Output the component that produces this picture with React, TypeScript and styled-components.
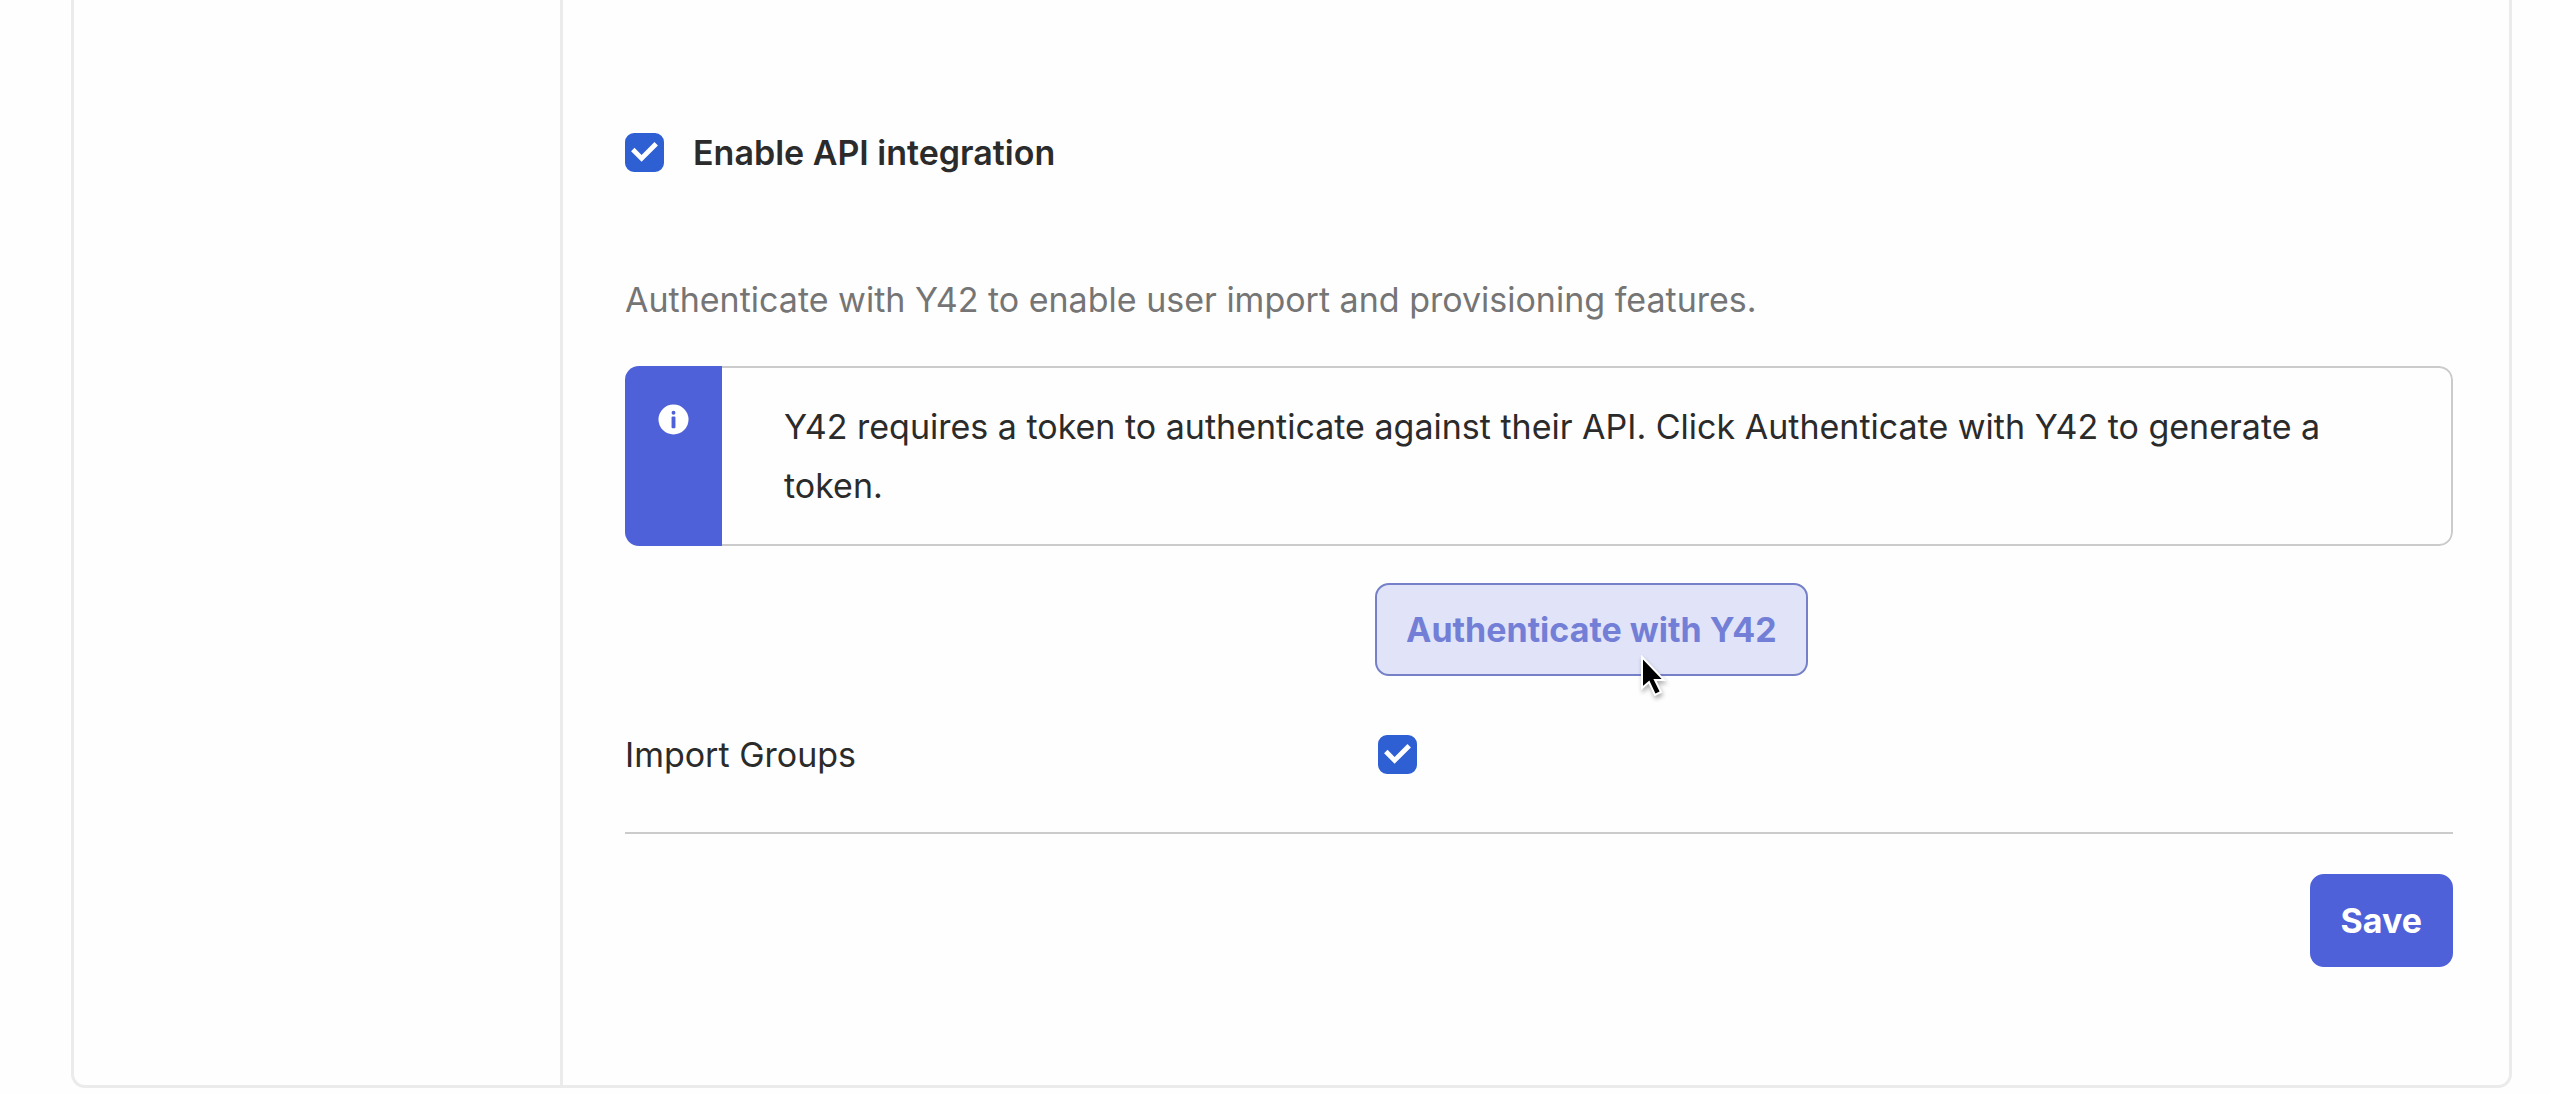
import React, { useState } from "react";
import styled, { createGlobalStyle } from "styled-components";

const GlobalStyle = createGlobalStyle`
  *, *::before, *::after { box-sizing: border-box; }
  body {
    margin: 0;
    background: #fefefe;
    color: #2b2b2b;
    font-family: Inter, "Liberation Sans", sans-serif;
    font-size: 34px;
    line-height: 59px;
  }
  button, input { font: inherit; }
`;

const Page = styled.main`
  padding: 0 38px 8px 71px;
`;

const Card = styled.div`
  display: flex;
  border: 3px solid #ebebeb;
  border-top: 0;
  border-radius: 0 0 14px 14px;
`;

const Sidebar = styled.aside`
  flex: 0 0 489px;
  border-right: 3px solid #ebebeb;
`;

const Content = styled.form`
  flex: 1;
  min-width: 0;
  padding: 123px 56px 118px 62px;
`;

const CheckField = styled.label`
  display: flex;
  align-items: center;
  gap: 29px;
  font-weight: 600;
`;

const CheckWrap = styled.span`
  display: grid;
  width: 39px;
  height: 39px;
  > * { grid-area: 1 / 1; }
`;

const CheckInput = styled.input`
  appearance: none;
  width: 39px;
  height: 39px;
  margin: 0;
  border: 2px solid #a0a0a0;
  border-radius: 9px;
  background: #fff;
  &:checked { border-color: #2e5fd3; background: #2e5fd3; }
`;

const CheckMark = styled.svg`
  width: 39px;
  height: 39px;
  pointer-events: none;
  fill: none;
  stroke: #fff;
  stroke-width: 5;
`;

const Description = styled.p`
  margin: 88px 0 37px;
  color: #757575;
`;

const Notice = styled.div`
  display: flex;
  overflow: hidden;
  border-radius: 14px;
`;

const NoticeIcon = styled.div`
  flex: 0 0 97px;
  padding-top: 38px;
  background: #4f61d9;
  text-align: center;
  line-height: 0;
`;

const NoticeText = styled.p`
  flex: 1;
  margin: 0;
  padding: 29px 60px 29px 62px;
  border: 2px solid #cbcbcb;
  border-left: 0;
  border-radius: 0 14px 14px 0;
`;

const Row = styled.div<{ $top: number }>`
  display: grid;
  grid-template-columns: 750px 1fr;
  align-items: center;
  margin-top: ${(p) => p.$top}px;
`;

const Control = styled.div`
  grid-column: 2;
  justify-self: start;
  position: relative;
`;

const CheckControl = styled(Control)`
  padding-left: 3px;
`;

const Button = styled.button<{ $soft?: boolean }>`
  display: block;
  height: 93px;
  padding: 0 29px;
  border: 2px solid ${(p) => (p.$soft ? "#7680c8" : "#4f61d9")};
  border-radius: 14px;
  background: ${(p) => (p.$soft ? "#e1e4f8" : "#4f61d9")};
  color: ${(p) => (p.$soft ? "#737fd6" : "#fff")};
  font-weight: 700;
`;

const Pointer = styled.svg`
  position: absolute;
  left: 264px;
  top: 72px;
  width: 34px;
  height: 50px;
  pointer-events: none;
  filter: drop-shadow(1px 3px 2px rgba(0, 0, 0, 0.3));
`;

const Divider = styled.hr`
  margin: 48px 0 40px;
  border: 0;
  border-top: 2px solid #cbcbcb;
`;

const Actions = styled.div`
  display: flex;
  justify-content: flex-end;
`;

function Checkbox({ id, checked, onToggle }: { id: string; checked: boolean; onToggle: () => void }) {
  return (
    <CheckWrap>
      <CheckInput id={id} type="checkbox" checked={checked} onChange={onToggle} />
      {checked && (
        <CheckMark viewBox="0 0 40 40" aria-hidden="true">
          <path d="M8 17 L17 26 L32 11" />
        </CheckMark>
      )}
    </CheckWrap>
  );
}

export default function App() {
  const [enabled, setEnabled] = useState(true);
  const [groups, setGroups] = useState(true);
  return (
    <>
      <GlobalStyle />
      <Page>
        <Card>
          <Sidebar />
          <Content onSubmit={(e) => e.preventDefault()}>
            <CheckField htmlFor="enable-api">
              <Checkbox id="enable-api" checked={enabled} onToggle={() => setEnabled(!enabled)} />
              Enable API integration
            </CheckField>
            <Description>Authenticate with Y42 to enable user import and provisioning features.</Description>
            <Notice>
              <NoticeIcon>
                <svg width="31" height="31" viewBox="0 0 32 32" aria-hidden="true">
                  <circle cx="16" cy="16" r="15.5" fill="#fff" />
                  <circle cx="16" cy="9" r="2" fill="#4f61d9" />
                  <rect x="14" y="13" width="4" height="12" rx="1" fill="#4f61d9" />
                </svg>
              </NoticeIcon>
              <NoticeText>
                Y42 requires a token to authenticate against their API. Click Authenticate with Y42 to generate a token.
              </NoticeText>
            </Notice>
            <Row $top={37}>
              <Control>
                <Button type="button" $soft>Authenticate with Y42</Button>
                <Pointer viewBox="0 0 34 50" aria-hidden="true">
                  <path
                    d="M3 2 L3 33 L10 27 L16 40 L22 37 L16 25 L25 25 Z"
                    fill="#000"
                    stroke="#fff"
                    strokeWidth="2"
                  />
                </Pointer>
              </Control>
            </Row>
            <Row $top={49}>
              <label htmlFor="import-groups">Import Groups</label>
              <CheckControl>
                <Checkbox id="import-groups" checked={groups} onToggle={() => setGroups(!groups)} />
              </CheckControl>
            </Row>
            <Divider />
            <Actions>
              <Button type="submit">Save</Button>
            </Actions>
          </Content>
        </Card>
      </Page>
    </>
  );
}
